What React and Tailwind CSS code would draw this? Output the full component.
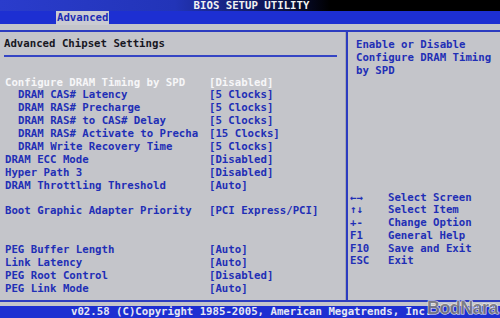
import React from "react";

const rows = [
  { label: "Configure DRAM Timing by SPD", value: "[Disabled]", hl: true },
  { label: "DRAM CAS# Latency", value: "[5 Clocks]", indent: true },
  { label: "DRAM RAS# Precharge", value: "[5 Clocks]", indent: true },
  { label: "DRAM RAS# to CAS# Delay", value: "[5 Clocks]", indent: true },
  { label: "DRAM RAS# Activate to Precha", value: "[15 Clocks]", indent: true },
  { label: "DRAM Write Recovery Time", value: "[5 Clocks]", indent: true },
  { label: "DRAM ECC Mode", value: "[Disabled]" },
  { label: "Hyper Path 3", value: "[Disabled]" },
  { label: "DRAM Throttling Threshold", value: "[Auto]" },
  { label: "", value: "" },
  { label: "Boot Graphic Adapter Priority", value: "[PCI Express/PCI]" },
  { label: "", value: "" },
  { label: "", value: "" },
  { label: "PEG Buffer Length", value: "[Auto]" },
  { label: "Link Latency", value: "[Auto]" },
  { label: "PEG Root Control", value: "[Disabled]" },
  { label: "PEG Link Mode", value: "[Auto]" },
];

const keys = [
  ["←→", "Select Screen"],
  ["↑↓", "Select Item"],
  ["+-", "Change Option"],
  ["F1", "General Help"],
  ["F10", "Save and Exit"],
  ["ESC", "Exit"],
];

export default function App() {
  return (
    <div className="relative w-[500px] h-[318px] overflow-hidden bg-[#c4c5ca] font-['DejaVu_Sans_Mono','Liberation_Mono',monospace] font-bold text-[10.7px] whitespace-pre">
      {/* Title bar */}
      <div className="h-[11px] bg-[linear-gradient(90deg,#2a3ccc_0%,#2234b8_35%,#0c1450_55%,#000_66%,#000_100%)] text-[#f2f2f2] text-center leading-[11px] pl-[3px]">
        BIOS SETUP UTILITY
      </div>
      {/* Tab bar */}
      <div className="h-[13px] bg-[#1d2fd2] flex pl-[56px]">
        <div className="h-[14px] w-[53px] bg-[#cacbd2] text-[#1c2cb4] leading-[14px] pl-[1px]">Advanced</div>
      </div>
      <div className="h-[6px]" />
      {/* top frame line */}
      <div className="h-[2px] bg-[#2c3cc0]" />
      {/* main area */}
      <div className="h-[268px] flex">
        <div className="w-[345px] flex flex-col">
          <div className="h-[23px] leading-[23px] pl-[4px] text-[#17171f]">Advanced Chipset Settings</div>
          <div className="h-[2px] ml-[4px] w-[333px] bg-[#3545c4]" />
          <div className="h-[19.5px]" />
          {rows.map((r, i) => (
            <div
              key={i}
              className={`h-[12.875px] leading-[12.875px] flex ${r.hl ? "text-[#f6f6f8]" : "text-[#1f2fb6]"}`}
            >
              <div className={`w-[209px] ${r.indent ? "pl-[18px]" : "pl-[5px]"}`}>{r.label}</div>
              <div>{r.value}</div>
            </div>
          ))}
        </div>
        <div className="w-[1px] bg-[#a9aab2]" />
        <div className="flex-1 border-l-2 border-[#2c3cc0] flex flex-col text-[#1f2fb6]">
          <div className="pt-[5.5px] pl-[8px] leading-[13px]">
            <div>Enable or Disable</div>
            <div>Configure DRAM Timing</div>
            <div>by SPD</div>
          </div>
          <div className="mt-[115px] leading-[12.8px]">
            {keys.map(([k, d]) => (
              <div key={k} className="flex">
                <div className="w-[40px] pl-[2px]">{k}</div>
                <div>{d}</div>
              </div>
            ))}
          </div>
        </div>
      </div>
      {/* bottom frame line */}
      <div className="h-[2px] bg-[#2c3cc0]" />
      <div className="h-[4px]" />
      {/* bottom bar */}
      <div className="h-[12px] bg-[#1d2fd2] text-[#e6e8f2] leading-[12px] pl-[71px]">
        v02.58 (C)Copyright 1985-2005, American Megatrends, Inc.
      </div>
      {/* watermark */}
      <div className="absolute left-[427px] top-[299px] font-['Liberation_Sans',sans-serif] font-bold text-[18px] leading-[19px] tracking-[-0.6px] text-[#74747e]/90 [-webkit-text-stroke:1px_#f0f0f0] [paint-order:stroke_fill]">
        BodNara
      </div>
    </div>
  );
}
